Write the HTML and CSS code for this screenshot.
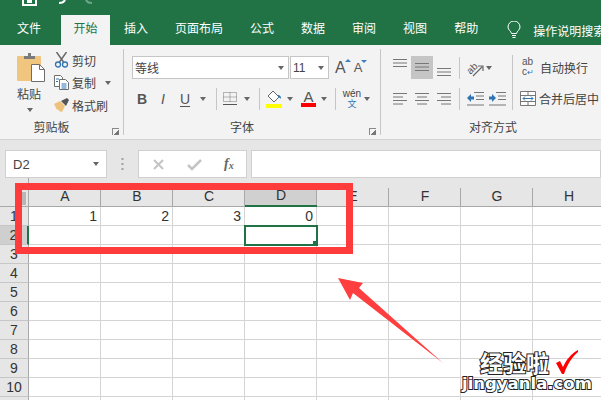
FILE: index.html
```html
<!DOCTYPE html>
<html lang="zh-CN">
<head>
    <meta charset="UTF-8">
    <title>Excel</title>
    <link rel="stylesheet" href="styles.css">
</head>
<body>
<div class="window">
    <div class="titlebar">
        <svg width="120" height="15" viewBox="0 0 120 15">
            <path d="M23 0v5h13V0" fill="none" stroke="#fff" stroke-width="2"/>
            <rect x="27" y="0" width="5" height="3" fill="#fff"/>
            <path d="M59 3c3 0 5-1 6-3" fill="none" stroke="#fff" stroke-width="2"/>
            <path d="M92 3c-3 0-5-1-6-3" fill="none" stroke="#6fa68a" stroke-width="2"/>
        </svg>
    </div>
    <div class="tabs">
        <span class="tab first">文件</span>
        <span class="tab active">开始</span>
        <span class="tab">插入</span>
        <span class="tab">页面布局</span>
        <span class="tab">公式</span>
        <span class="tab">数据</span>
        <span class="tab">审阅</span>
        <span class="tab">视图</span>
        <span class="tab">帮助</span>
        <svg class="bulb" width="14" height="18" viewBox="0 0 14 18">
            <path d="M4.500 12.500C4 10 1 9 1 6a6 6 0 0 1 12 0c0 3-3 4-3.500 6.500z" fill="none" stroke="#fff"/>
            <path d="M5 14.500h4M5.500 16.500h3" stroke="#fff"/>
        </svg>
        <span class="search">操作说明搜索</span>
    </div>

    <div class="ribbon">
        <div class="group clipboard">
            <div class="group-body">
                <div class="paste">
                    <svg width="28" height="29" viewBox="0 0 28 29">
                        <rect x="0" y="3" width="24" height="25" rx="1" fill="#f0c67e"/>
                        <path d="M7 6V3h4V0h3v3h4v3z" fill="#7b7b7b"/>
                        <path d="M14.500 11.500h8l5 5v12h-13z" fill="#fff" stroke="#6e6e6e"/>
                        <path d="M22.500 11.500v5h5" fill="none" stroke="#6e6e6e"/>
                    </svg>
                    <span class="paste-text">粘贴</span>
                    <i class="caret"></i>
                </div>
                <div class="clip-list">
                    <div class="clip-row">
                        <svg width="14" height="16" viewBox="0 0 14 16">
                            <path d="M2 0l7 10M12 0L5 10" stroke="#6a6a6a" stroke-width="1.500" fill="none"/>
                            <circle cx="3.500" cy="12.500" r="2.500" fill="none" stroke="#2f75b5" stroke-width="1.300"/>
                            <circle cx="10.500" cy="12.500" r="2.500" fill="none" stroke="#2f75b5" stroke-width="1.300"/>
                        </svg>
                        <span>剪切</span>
                    </div>
                    <div class="clip-row">
                        <svg width="15" height="15" viewBox="0 0 15 15">
                            <path d="M.5.500h6l2 2v9h-8z" fill="#fff" stroke="#6e6e6e"/>
                            <path d="M5.500 4.500h6l3 3v7h-9z" fill="#fff" stroke="#6e6e6e"/>
                            <path d="M2 4h3M2 6.500h2M7.500 9h5M7.500 11h5M7.500 13h5" stroke="#2f75b5"/>
                        </svg>
                        <span>复制</span>
                        <i class="caret copy-caret"></i>
                    </div>
                    <div class="clip-row">
                        <svg width="15" height="14" viewBox="0 0 15 14">
                            <path d="M0 6l6-3 5 5-3 6-3-1-1-2-1 1z" fill="#eec27c"/>
                            <path d="M7 3l6-3 2 2-3 6z" fill="#555"/>
                        </svg>
                        <span>格式刷</span>
                    </div>
                </div>
            </div>
            <div class="group-foot">
                <span class="group-title">剪贴板</span>
                <i class="launcher"></i>
            </div>
        </div>

        <div class="group font">
            <div class="group-body stacked">
                <div class="tool-row">
                    <div class="combo font-name"><span>等线</span><i class="caret"></i></div>
                    <div class="combo font-size"><span>11</span><i class="caret"></i></div>
                    <span class="grow-a">A<i class="up"></i></span>
                    <span class="shrink-a">A<i class="down"></i></span>
                </div>
                <div class="tool-row">
                    <b class="style-btn bold">B</b>
                    <i class="style-btn italic">I</i>
                    <u class="style-btn under">U</u>
                    <i class="caret"></i>
                    <i class="sep s1"></i>
                    <svg class="borders" width="16" height="15" viewBox="0 0 16 15">
                        <path d="M1.500 1.500h13v9h-13zM8 1.500v9M1.500 6h13" fill="none" stroke="#777" stroke-dasharray="1 1"/>
                        <path d="M1 13.500h14" stroke="#555"/>
                    </svg>
                    <i class="caret c1"></i>
                    <i class="sep s2"></i>
                    <svg class="fill-color" width="16" height="18" viewBox="0 0 16 18">
                        <path d="M7 1l6 6-5 5-6-6z" fill="#fff" stroke="#666"/>
                        <path d="M12 5c2 0 3 1 3 4-1-1-2-2-3-2z" fill="#2f75b5"/>
                        <rect y="14" width="16" height="4" fill="#ffff00"/>
                    </svg>
                    <i class="caret c2"></i>
                    <span class="font-color">A</span>
                    <i class="caret c2"></i>
                    <i class="sep s3"></i>
                    <span class="phonetic"><em>wén</em><strong>文</strong></span>
                    <i class="caret"></i>
                </div>
            </div>
            <div class="group-foot">
                <span class="group-title">字体</span>
                <i class="launcher"></i>
            </div>
        </div>

        <div class="group align">
            <div class="group-body align-body">
                <div class="stacked">
                    <div class="tool-row">
                        <svg class="line-tool" width="22" height="23" viewBox="0 0 22 23"><path d="M4 3.500h14M4 7h14M4 10.500h14" stroke="#777"/></svg>
                        <svg class="line-tool on" width="22" height="23" viewBox="0 0 22 23"><path d="M4 7.500h14M4 11h14M4 14.500h14" stroke="#777"/></svg>
                        <svg class="line-tool" width="22" height="23" viewBox="0 0 22 23"><path d="M4 12.500h14M4 16h14M4 19.500h14" stroke="#777"/></svg>
                        <i class="sep a1"></i>
                        <svg class="orient" width="18" height="18" viewBox="0 0 18 18">
                            <text class="orient-text" x="1" y="13" transform="rotate(-45 6 10)">ab</text>
                            <path d="M7 17L16 8M12 7h5v5" fill="none" stroke="#666" stroke-width="1.200"/>
                        </svg>
                        <i class="caret c3"></i>
                    </div>
                    <div class="tool-row">
                        <svg class="line-tool" width="22" height="23" viewBox="0 0 22 23"><path d="M4 6.500h14M4 10h10M4 13.500h14M4 17h10" stroke="#777"/></svg>
                        <svg class="line-tool" width="22" height="23" viewBox="0 0 22 23"><path d="M4 6.500h14M6 10h10M4 13.500h14M6 17h10" stroke="#777"/></svg>
                        <svg class="line-tool" width="22" height="23" viewBox="0 0 22 23"><path d="M4 6.500h14M8 10h10M4 13.500h14M8 17h10" stroke="#777"/></svg>
                        <i class="sep a1"></i>
                        <svg class="indent" width="18" height="15" viewBox="0 0 18 15">
                            <path d="M8 1.500h10M10 5h8M10 8.500h8M1 14h17" stroke="#777"/>
                            <path d="M1 7l4-4v2.500h3v3H5V11z" fill="#2f75b5"/>
                        </svg>
                        <svg class="indent" width="18" height="15" viewBox="0 0 18 15">
                            <path d="M8 1.500h10M10 5h8M10 8.500h8M1 14h17" stroke="#777"/>
                            <path d="M8 7L4 3v2.500H1v3h3V11z" fill="#2f75b5"/>
                        </svg>
                    </div>
                </div>
                <i class="sep long"></i>
                <div class="stacked">
                    <div class="tool-row wrap-row">
                        <span class="wrap-icon"><span>ab</span><span>c<i>↵</i></span></span>
                        <span>自动换行</span>
                    </div>
                    <div class="tool-row merge-row">
                        <svg width="16" height="15" viewBox="0 0 16 15">
                            <path d="M.5.500h15v14H.5zM.5 4.500h15M.5 10.500h15M8 .5v4M8 10.500v4" fill="#fff" stroke="#777"/>
                            <path d="M3 7.500h10M3 7.500l2-2M3 7.500l2 2M13 7.500l-2-2M13 7.500l-2 2" fill="none" stroke="#2f75b5"/>
                        </svg>
                        <span>合并后居中</span>
                    </div>
                </div>
            </div>
            <div class="group-foot">
                <span class="group-title">对齐方式</span>
            </div>
        </div>
    </div>

    <div class="formula-bar">
        <div class="name-box"><span>D2</span><i class="caret"></i></div>
        <svg class="dots" width="3" height="12" viewBox="0 0 3 12"><path d="M1.500 0v2M1.500 5v2M1.500 10v2" stroke="#a0a0a0" stroke-width="2"/></svg>
        <div class="fx-box">
            <svg width="13" height="13" viewBox="0 0 13 13"><path d="M2 2l9 9M11 2l-9 9" stroke="#c4c4c4" stroke-width="2"/></svg>
            <svg width="15" height="13" viewBox="0 0 15 13"><path d="M1 7l4 4 9-9" fill="none" stroke="#c4c4c4" stroke-width="2.500"/></svg>
            <span class="fx">f<sub>x</sub></span>
        </div>
        <div class="formula-input"></div>
    </div>

    <div class="sheet">
        <div class="corner"><i></i></div>
        <div class="col">A</div><div class="col">B</div><div class="col">C</div><div class="col picked">D</div><div class="col">E</div><div class="col">F</div><div class="col">G</div><div class="col">H</div>

        <div class="row-no">1</div><div class="cell">1</div><div class="cell">2</div><div class="cell">3</div><div class="cell">0</div><div class="cell"></div><div class="cell"></div><div class="cell"></div><div class="cell"></div>
        <div class="row-no picked-row">2</div><div class="cell"></div><div class="cell"></div><div class="cell"></div><div class="cell selected"></div><div class="cell"></div><div class="cell"></div><div class="cell"></div><div class="cell"></div>
        <div class="row-no">3</div><div class="cell"></div><div class="cell"></div><div class="cell"></div><div class="cell"></div><div class="cell"></div><div class="cell"></div><div class="cell"></div><div class="cell"></div>
        <div class="row-no">4</div><div class="cell"></div><div class="cell"></div><div class="cell"></div><div class="cell"></div><div class="cell"></div><div class="cell"></div><div class="cell"></div><div class="cell"></div>
        <div class="row-no">5</div><div class="cell"></div><div class="cell"></div><div class="cell"></div><div class="cell"></div><div class="cell"></div><div class="cell"></div><div class="cell"></div><div class="cell"></div>
        <div class="row-no">6</div><div class="cell"></div><div class="cell"></div><div class="cell"></div><div class="cell"></div><div class="cell"></div><div class="cell"></div><div class="cell"></div><div class="cell"></div>
        <div class="row-no">7</div><div class="cell"></div><div class="cell"></div><div class="cell"></div><div class="cell"></div><div class="cell"></div><div class="cell"></div><div class="cell"></div><div class="cell"></div>
        <div class="row-no">8</div><div class="cell"></div><div class="cell"></div><div class="cell"></div><div class="cell"></div><div class="cell"></div><div class="cell"></div><div class="cell"></div><div class="cell"></div>
        <div class="row-no">9</div><div class="cell"></div><div class="cell"></div><div class="cell"></div><div class="cell"></div><div class="cell"></div><div class="cell"></div><div class="cell"></div><div class="cell"></div>
        <div class="row-no">10</div><div class="cell"></div><div class="cell"></div><div class="cell"></div><div class="cell"></div><div class="cell"></div><div class="cell"></div><div class="cell"></div><div class="cell"></div>
        <div class="row-no"></div><div class="cell"></div><div class="cell"></div><div class="cell"></div><div class="cell"></div><div class="cell"></div><div class="cell"></div><div class="cell"></div><div class="cell"></div>
    </div>

    <!-- annotations pasted on top of the screenshot -->
    <div class="red-box"></div>
    <svg class="red-arrow" width="110" height="90" viewBox="338 278 110 90">
        <polygon points="338,278 363,283 359,288 443,363 353,293 350,300" fill="#ff3f3f"/>
    </svg>
    <div class="watermark">
        <div class="wm-top">
            <span>经验啦</span>
            <svg width="24" height="24" viewBox="0 0 24 24"><path d="M1 13l4-2 3 6C11 10 16 4 23 0v2C17 7 12 15 9 24H7z" fill="#f00"/></svg>
        </div>
        <div class="wm-url">jingyanla.com</div>
    </div>
</div>
</body>
</html>
```

FILE: styles.css
```css
body {
    margin: 0;
    font-family: "Liberation Sans", "Noto Sans CJK SC", sans-serif;
    font-size: 12px;
    color: #444;
}

.window {
    position: relative;
    width: 601px;
    height: 400px;
    overflow: hidden;
    background: #e6e6e6;
}

.titlebar {
    height: 15px;
    background: #217346;
}

.titlebar svg {
    display: block;
}

.tabs {
    display: flex;
    align-items: center;
    gap: 3px;
    height: 30px;
    padding-left: 5px;
    background: #217346;
    color: #fff;
    white-space: nowrap;
    overflow: hidden;
}

.tab {
    flex: none;
    height: 30px;
    padding: 0 12px;
    line-height: 28px;
}

.tab.first {
    margin-right: 5px;
}

.tab.active {
    background: #f3f3f3;
    color: #217346;
    padding: 0 12.5px;
    margin-right: -1px;
}

.bulb {
    flex: none;
    margin-left: 14px;
}

.search {
    flex: none;
    margin-left: 9px;
}

.ribbon {
    display: flex;
    height: 94px;
    background: #f3f3f3;
    border-bottom: 1px solid #d2d2d2;
    white-space: nowrap;
}

.group {
    display: flex;
    flex-direction: column;
    flex: none;
    height: 86px;
    margin-top: 4px;
    border-right: 1px solid #c6c6c6;
    box-sizing: border-box;
}

.clipboard {
    width: 124px;
}

.font {
    width: 257px;
}

.align {
    width: 244px;
    border-right: 0;
}

.group-body {
    display: flex;
    flex: none;
    height: 71px;
    box-sizing: border-box;
}

.stacked {
    display: flex;
    flex-direction: column;
    gap: 8px;
    padding-top: 7px;
}

.font .group-body {
    padding-left: 8px;
}

.group-foot {
    display: grid;
    grid-template-columns: 1fr auto 1fr;
    align-items: center;
    flex: none;
    height: 17px;
    padding-right: 4px;
}

.group-title {
    grid-column: 2;
    margin-right: 16px;
    line-height: 17px;
}

.launcher {
    justify-self: end;
    align-self: end;
    width: 6px;
    height: 6px;
    margin-bottom: 2px;
    border: solid #8a8a8a;
    border-width: 1px 0 0 1px;
    background: linear-gradient(135deg, transparent 50%, #777 50%);
}

.caret {
    display: flex;
    justify-content: center;
    align-items: center;
    flex: none;
    width: 12px;
    height: 23px;
}

.caret::before {
    content: "";
    border: solid transparent;
    border-width: 4px 3.5px 0;
    border-top-color: #666;
}

/* clipboard */
.paste {
    display: flex;
    flex-direction: column;
    width: 28px;
    padding: 4px 0 0 17px;
}

.paste-text {
    margin-top: 4px;
    line-height: 18px;
}

.paste .caret {
    width: 26px;
    height: 10px;
    margin-top: 1px;
}

.clip-list {
    margin-left: 9px;
}

.clip-row {
    display: flex;
    align-items: center;
    height: 22.5px;
}

.clip-row svg {
    flex: none;
    width: 15px;
    margin-right: 3px;
}

.copy-caret {
    margin-left: 6px;
}

/* font */
.tool-row {
    display: flex;
    align-items: center;
    height: 23px;
}

.combo {
    display: flex;
    align-items: center;
    justify-content: space-between;
    box-sizing: border-box;
    height: 23px;
    padding: 0 1px 0 2px;
    background: #fff;
    border: 1px solid #c6c6c6;
}

.font-name {
    width: 157px;
    margin-right: 1px;
}

.font-size {
    width: 39px;
}

.grow-a,
.shrink-a {
    position: relative;
    font-size: 15px;
    color: #555;
}

.grow-a {
    margin-left: 6px;
    font-size: 16px;
}

.shrink-a {
    margin-left: 8px;
    font-size: 13px;
}

.up,
.down {
    position: absolute;
    top: 0;
    right: -5px;
    border: solid transparent;
    border-width: 0 3px 3px;
    border-bottom-color: #3c7fbf;
}

.down {
    border-width: 3px 3px 0;
    border-top-color: #3c7fbf;
}

.style-btn {
    width: 22px;
    text-align: center;
    font-family: "Liberation Sans", sans-serif;
    font-size: 14px;
    color: #555;
}

.bold {
    width: 20px;
}

.under {
    margin-right: 1px;
    text-underline-offset: 2px;
}

.sep {
    flex: none;
    width: 1px;
    height: 22px;
    background: #c6c6c6;
}

.s1 {
    margin-left: 7px;
}

.borders {
    margin-left: 5px;
}

.c1 {
    margin-left: 3px;
}

.s2 {
    margin-left: 6px;
}

.fill-color {
    margin-left: 6px;
}

.c2 {
    margin-left: 2px;
}

.font-color {
    width: 15px;
    margin-left: 5px;
    border-bottom: 4px solid #f00;
    text-align: center;
    font-size: 15px;
    line-height: 13px;
    color: #555;
}

.s3 {
    margin-left: 5px;
}

.phonetic {
    display: flex;
    flex-direction: column;
    align-items: center;
    width: 18px;
    margin-left: 7px;
    line-height: 10px;
}

.phonetic em {
    font-style: normal;
    font-size: 10px;
}

.phonetic strong {
    font-size: 9px;
    font-weight: 400;
    color: #2f75b5;
}

/* alignment */
.align-body {
    padding-left: 8px;
}

.line-tool {
    flex: none;
    display: block;
}

.line-tool.on {
    background: #c5c5c5;
}

.a1 {
    margin-left: 4px;
}

.orient {
    margin-left: 6px;
}

.orient-text {
    font-size: 10px;
    fill: #555;
}

.c3 {
    margin-left: -1px;
}

.indent {
    margin-left: 6px;
}

.indent + .indent {
    margin-left: 4px;
}

.sep.long {
    height: 55px;
    margin: 6px 0 0 6px;
}

.wrap-row {
    padding-left: 9px;
    gap: 4px;
}

.wrap-icon {
    display: flex;
    flex-direction: column;
    width: 14px;
    font-size: 10px;
    line-height: 10px;
    color: #555;
}

.wrap-icon i {
    font-style: normal;
    font-size: 8px;
    color: #2f75b5;
}

.merge-row {
    padding-left: 7px;
    gap: 3px;
}

/* formula bar */
.formula-bar {
    display: flex;
    align-items: center;
    height: 28px;
    margin-top: 10px;
}

.name-box {
    display: flex;
    align-items: center;
    justify-content: space-between;
    box-sizing: border-box;
    width: 102px;
    height: 28px;
    margin-left: 5px;
    padding: 0 4px 0 7px;
    background: #fff;
    border: 1px solid #d0d0d0;
    font-size: 13px;
}

.dots {
    margin: 0 14px 0 14px;
}

.fx-box {
    display: flex;
    align-items: center;
    box-sizing: border-box;
    gap: 22px;
    width: 109px;
    height: 28px;
    padding-left: 13px;
    background: #fff;
    border: 1px solid #d0d0d0;
}

.fx {
    font-family: "Liberation Serif", serif;
    font-style: italic;
    font-weight: 700;
    font-size: 14px;
    color: #666;
}

.fx sub {
    font-size: 10px;
    vertical-align: -1px;
}

.formula-input {
    flex: 1;
    height: 28px;
    margin-left: 4px;
    box-sizing: border-box;
    background: #fff;
    border: 1px solid #d0d0d0;
}

/* sheet */
.sheet {
    display: grid;
    grid-template-columns: 29px repeat(8, 72px);
    grid-template-rows: 29px repeat(11, 19px);
    font-size: 14px;
    color: #333;
}

.corner {
    display: flex;
    align-items: flex-end;
    justify-content: flex-end;
    box-sizing: border-box;
    padding: 0 2px 1px 0;
    border-right: 1px solid #a8a8a8;
    border-bottom: 1px solid #a8a8a8;
}

.corner i {
    width: 4px;
    height: 13px;
    background: #b7b7b7;
}

.col {
    box-sizing: border-box;
    padding-bottom: 1px;
    border-bottom: 1px solid #a8a8a8;
    background: linear-gradient(#a8a8a8, #a8a8a8) right bottom / 1px 18px no-repeat;
    display: flex;
    align-items: flex-end;
    justify-content: center;
    line-height: 18px;
}

.col.picked {
    height: 18px;
    align-self: end;
    background-color: #d0d0d0;
    border-bottom: 2px solid #217346;
}

.row-no {
    box-sizing: border-box;
    border-right: 1px solid #a8a8a8;
    border-bottom: 1px solid #c6c6c6;
    text-align: center;
    line-height: 19px;
}

.row-no.picked-row {
    background: #cfcfcf;
    border-right: 2px solid #217346;
}

.cell {
    position: relative;
    box-sizing: border-box;
    padding-right: 3px;
    background: #fff;
    border-right: 1px solid #d4d4d4;
    border-bottom: 1px solid #d4d4d4;
    text-align: right;
    line-height: 19px;
}

.cell.selected {
    z-index: 1;
    outline: 2px solid #217346;
    outline-offset: -1px;
}

.cell.selected::after {
    content: "";
    position: absolute;
    right: -2px;
    bottom: -2px;
    width: 5px;
    height: 5px;
    background: #217346;
}

/* annotations */
.red-box {
    position: absolute;
    left: 15px;
    top: 183px;
    z-index: 2;
    box-sizing: border-box;
    width: 338px;
    height: 71px;
    border: 7px solid #ff3b3b;
}

.red-arrow {
    position: absolute;
    left: 338px;
    top: 278px;
    z-index: 2;
}

.watermark {
    position: absolute;
    left: 462px;
    top: 348px;
    z-index: 2;
    color: #fff;
    font-weight: 700;
    -webkit-text-stroke: 2px #222;
    paint-order: stroke fill;
}

.wm-top {
    display: flex;
    align-items: center;
    padding-left: 18px;
    gap: 6px;
    height: 27px;
    font-size: 23px;
}

.wm-url {
    font-family: "DejaVu Sans", sans-serif;
    font-size: 16.500px;
    line-height: 18px;
}
```
